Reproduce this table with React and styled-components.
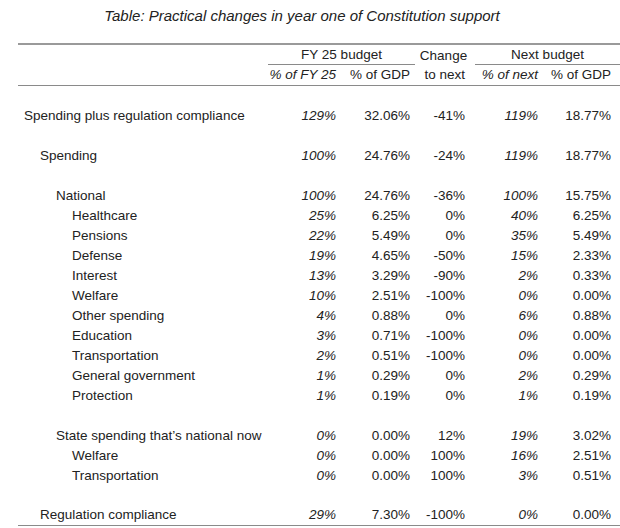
import React from "react";
import styled, {createGlobalStyle} from "styled-components";

const GlobalStyle = createGlobalStyle`
  body {
    margin: 0;
    background: #ffffff;
    font-family: "Liberation Sans", Arial, sans-serif;
    color: #222222;
  }
`;

const Page = styled.div`
  width: 620px;
  height: 528px;
  overflow: hidden;
  padding-left: 18px;
  box-sizing: border-box;
`;

const Title = styled.div`
  font-style: italic;
  font-size: 15px;
  text-align: center;
  line-height: 20px;
  padding: 6px 16px 0 0;
  margin-left: -18px;
  height: 43px;
  box-sizing: border-box;
`;

const Table = styled.table`
  width: 602px;
  border-collapse: collapse;
  table-layout: fixed;
  font-size: 13.5px;
  border-top: 2px solid #9a9a9a;
  border-bottom: 1px solid #8a8a8a;
`;

const HeadRow = styled.tr`
  height: ${props => props.h || 20}px;
  border-bottom: ${props => (props.ruled ? "1px solid #8a8a8a" : "none")};
`;

const GroupTh = styled.th`
  font-weight: 400;
  text-align: center;
  padding: 0;
  vertical-align: bottom;
`;

const GroupLabel = styled.div`
  border-bottom: ${props => (props.underline ? "1px solid #8a8a8a" : "none")};
  margin-left: ${props => props.ml || 0}px;
  margin-right: ${props => props.mr || 0}px;
  line-height: 19px;
`;

const SubTh = styled.th`
  font-weight: 400;
  font-style: ${props => (props.italic ? "italic" : "normal")};
  text-align: right;
  padding: 0 ${props => props.pr || 6}px 0 0;
  white-space: nowrap;
`;

const Row = styled.tr`
  height: 20px;
`;

const Label = styled.td`
  padding: 0 0 0 ${props => 6 + props.level * 16}px;
  white-space: nowrap;
`;

const Cell = styled.td`
  text-align: right;
  padding: 0 ${props => props.pr || 6}px 0 0;
  font-style: ${props => (props.italic ? "italic" : "normal")};
  white-space: nowrap;
`;

const rows = [
  null,
  {label: "Spending plus regulation compliance", level: 0, v: ["129%", "32.06%", "-41%", "119%", "18.77%"]},
  null,
  {label: "Spending", level: 1, v: ["100%", "24.76%", "-24%", "119%", "18.77%"]},
  null,
  {label: "National", level: 2, v: ["100%", "24.76%", "-36%", "100%", "15.75%"]},
  {label: "Healthcare", level: 3, v: ["25%", "6.25%", "0%", "40%", "6.25%"]},
  {label: "Pensions", level: 3, v: ["22%", "5.49%", "0%", "35%", "5.49%"]},
  {label: "Defense", level: 3, v: ["19%", "4.65%", "-50%", "15%", "2.33%"]},
  {label: "Interest", level: 3, v: ["13%", "3.29%", "-90%", "2%", "0.33%"]},
  {label: "Welfare", level: 3, v: ["10%", "2.51%", "-100%", "0%", "0.00%"]},
  {label: "Other spending", level: 3, v: ["4%", "0.88%", "0%", "6%", "0.88%"]},
  {label: "Education", level: 3, v: ["3%", "0.71%", "-100%", "0%", "0.00%"]},
  {label: "Transportation", level: 3, v: ["2%", "0.51%", "-100%", "0%", "0.00%"]},
  {label: "General government", level: 3, v: ["1%", "0.29%", "0%", "2%", "0.29%"]},
  {label: "Protection", level: 3, v: ["1%", "0.19%", "0%", "1%", "0.19%"]},
  null,
  {label: "State spending that\u2019s national now", level: 2, v: ["0%", "0.00%", "12%", "19%", "3.02%"]},
  {label: "Welfare", level: 3, v: ["0%", "0.00%", "100%", "16%", "2.51%"]},
  {label: "Transportation", level: 3, v: ["0%", "0.00%", "100%", "3%", "0.51%"]},
  null,
  {label: "Regulation compliance", level: 1, v: ["29%", "7.30%", "-100%", "0%", "0.00%"]},
];

const italicCols = [true, false, false, true, false];

export default () => {
  return (
    <Page>
      <GlobalStyle />
      <Title>Table: Practical changes in year one of Constitution support</Title>
      <Table>
        <colgroup>
          <col style={{width: 250}} />
          <col style={{width: 74}} />
          <col style={{width: 74}} />
          <col style={{width: 55}} />
          <col style={{width: 73}} />
          <col style={{width: 76}} />
        </colgroup>
        <thead>
          <HeadRow h={21}>
            <GroupTh />
            <GroupTh colSpan={2}>
              <GroupLabel underline mr={1}>
                FY 25 budget
              </GroupLabel>
            </GroupTh>
            <GroupTh>
              <GroupLabel>Change</GroupLabel>
            </GroupTh>
            <GroupTh colSpan={2}>
              <GroupLabel underline ml={4}>
                Next budget
              </GroupLabel>
            </GroupTh>
          </HeadRow>
          <HeadRow h={20} ruled>
            <SubTh />
            <SubTh italic>% of FY 25</SubTh>
            <SubTh>% of GDP</SubTh>
            <SubTh>to next</SubTh>
            <SubTh italic>% of next</SubTh>
            <SubTh pr={9}>% of GDP</SubTh>
          </HeadRow>
        </thead>
        <tbody>
          {rows.map((row, i) =>
            row ? (
              <Row key={i}>
                <Label level={row.level}>{row.label}</Label>
                {row.v.map((value, j) => (
                  <Cell key={j} italic={italicCols[j]} pr={j === 4 ? 9 : 6}>
                    {value}
                  </Cell>
                ))}
              </Row>
            ) : (
              <Row key={i}>
                <td colSpan={6} />
              </Row>
            ),
          )}
        </tbody>
      </Table>
    </Page>
  );
};
